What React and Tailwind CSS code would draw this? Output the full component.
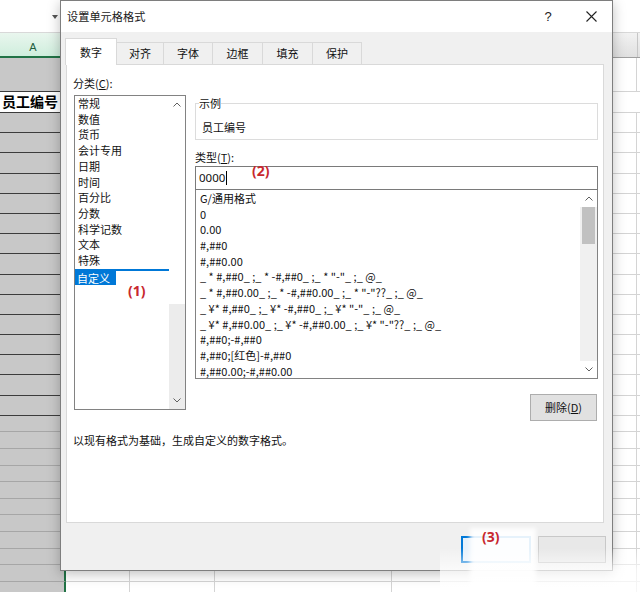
import React from "react";

const CATS = ["常规", "数值", "货币", "会计专用", "日期", "时间", "百分比", "分数", "科学记数", "文本", "特殊"];
const FORMATS = [
  "G/通用格式",
  "0",
  "0.00",
  "#,##0",
  "#,##0.00",
  '_ * #,##0_ ;_ * -#,##0_ ;_ * "-"_ ;_ @_',
  '_ * #,##0.00_ ;_ * -#,##0.00_ ;_ * "-"??_ ;_ @_',
  '_ ¥* #,##0_ ;_ ¥* -#,##0_ ;_ ¥* "-"_ ;_ @_',
  '_ ¥* #,##0.00_ ;_ ¥* -#,##0.00_ ;_ ¥* "-"??_ ;_ @_',
  "#,##0;-#,##0",
  "#,##0;[红色]-#,##0",
  "#,##0.00;-#,##0.00",
];

function Cells({ aClass, rowClass }) {
  return (
    <div className={"flex " + rowClass}>
      <div className={"w-[66px] shrink-0 border-r-2 border-r-[#217346] " + aClass} />
      <div className="w-[64px] shrink-0 border-r border-b border-[#d4d4d4] bg-white" />
      <div className="w-[85px] shrink-0 border-r border-b border-[#d4d4d4] bg-white" />
      <div className="w-[177px] shrink-0 border-r border-b border-[#d4d4d4] bg-white" />
      <div className="w-[245px] shrink-0 border-r border-b border-[#d4d4d4] bg-white" />
      <div className="flex-1 border-b border-[#d4d4d4] bg-white" />
    </div>
  );
}

function Arrow({ up }) {
  return (
    <svg width="8" height="5" viewBox="0 0 8 5" className="block">
      <path d={up ? "M0.5 4.5 L4 1 L7.5 4.5" : "M0.5 0.5 L4 4 L7.5 0.5"} fill="none" stroke="#606060" strokeWidth="1" />
    </svg>
  );
}

export default function App() {
  const darkRows = Array.from({ length: 15 });
  const lightRows = Array.from({ length: 11 });
  return (
    <div className="relative w-[640px] h-[592px] overflow-hidden bg-white font-['Noto_Sans_CJK_SC','Noto_Sans',sans-serif] text-[#111]">
      {/* spreadsheet background */}
      <div className="flex flex-col">
        <div className="h-[33px] bg-white border-b border-[#d8d8d8] flex items-center">
          <div className="ml-[52px] mt-[2px] w-0 h-0 border-l-[3.5px] border-r-[3.5px] border-t-[4px] border-l-transparent border-r-transparent border-t-[#555]" />
        </div>
        <div className="flex h-[25px]">
          <div className="w-[66px] shrink-0 bg-gradient-to-b from-[#e9f6ee] to-[#cfeedd] border-b-2 border-[#217346] flex items-end justify-center pb-[1px] text-[11px] text-[#1e5e3e] font-['Liberation_Sans',sans-serif]">A</div>
          <div className="flex-1 bg-gradient-to-b from-[#f2f2f2] to-[#e0e0e0] border-b border-[#9f9f9f] flex justify-end">
            <div className="w-[3px] border-l border-[#c6c6c6]" />
          </div>
        </div>
        <Cells rowClass="h-[34px]" aClass="bg-[#c8c8c8] border-b-[1.5px] border-b-[#3c3c3c]" />
        <div className="flex h-[21px]">
          <div className="w-[66px] shrink-0 border-r-2 border-r-[#217346] bg-white border-b-[1.5px] border-b-[#3c3c3c] pl-[2px] text-[14px] leading-[19px] font-bold text-black">员工编号</div>
          <div className="flex-1 border-b border-[#d4d4d4] bg-white" />
        </div>
        {darkRows.map((_, i) => (
          <Cells key={"d" + i} rowClass="h-[20.2px]" aClass="bg-[#c8c8c8] border-b-[1.5px] border-b-[#3c3c3c]" />
        ))}
        {lightRows.map((_, i) => (
          <Cells key={"l" + i} rowClass="h-[16.6px]" aClass="bg-[#c8c8c8] border-b border-b-[#a6a6a6]" />
        ))}
      </div>

      {/* dialog */}
      <div className="absolute left-[60px] top-0 w-[553px] h-[571px] border border-[#7e7e7e] bg-[#f0f0f0] shadow-[0_3px_12px_rgba(0,0,0,0.25)] flex flex-col text-[11px]">
        <div className="h-[31px] shrink-0 bg-white flex items-center">
          <div className="flex-1 pl-[6px] text-[11.2px] text-[#1a1a1a]">设置单元格格式</div>
          <div className="w-[44px] text-center text-[13px] font-['Liberation_Sans',sans-serif] text-[#222]">?</div>
          <div className="w-[42px] flex justify-center">
            <svg width="11" height="11" viewBox="0 0 11 11">
              <path d="M0.5 0.5 L10.5 10.5 M10.5 0.5 L0.5 10.5" stroke="#222" strokeWidth="1.1" />
            </svg>
          </div>
        </div>

        <div className="h-[32px] shrink-0 flex items-end pl-[4px]">
          <div className="relative z-10 -mb-px w-[52px] h-[27px] bg-white border border-b-0 border-[#d9d9d9] flex items-center justify-center">数字</div>
          {[["对齐", "w-[47px]"], ["字体", "w-[49px]"], ["边框", "w-[50px]"], ["填充", "w-[50px]"], ["保护", "w-[49px]"]].map(([t, w]) => (
            <div key={t} className={w + " h-[22px] border-t border-r border-[#d9d9d9] bg-[#f0f0f0] flex items-center justify-center"}>{t}</div>
          ))}
        </div>

        <div className="ml-[5px] w-[538px] h-[459px] shrink-0 bg-white border border-[#d9d9d9] flex flex-col">
          <div className="flex pt-[10px]">
            <div className="w-[120px] shrink-0">
              <div className="pl-[6px] leading-[16px]">分类(<span className="underline">C</span>):</div>
              <div className="ml-[7px] mt-[4px] w-[112px] h-[315px] border border-[#828282] flex">
                <div className="flex-1 min-w-0">
                  {CATS.map((c) => (
                    <div key={c} className="pl-[3px] leading-[15.73px] h-[15.73px]">{c}</div>
                  ))}
                  <div className="h-[15.73px] border-t-2 border-[#0078d7] flex">
                    <span className="bg-[#0078d7] text-white pl-[2px] pr-[6px] leading-[14px]">自定义</span>
                  </div>
                </div>
                <div className="w-[16px] flex flex-col">
                  <div className="h-[17px] flex items-center justify-center"><Arrow up /></div>
                  <div className="flex-1 flex flex-col">
                    <div className="h-[191px] bg-white" />
                    <div className="flex-1 bg-[#ececec]" />
                  </div>
                  <div className="h-[17px] bg-[#ececec] flex items-center justify-center"><Arrow /></div>
                </div>
              </div>
            </div>

            <div className="ml-[8px] w-[403px] shrink-0 flex flex-col">
              <fieldset className="mt-[20px] min-w-0 border border-[#dcdcdc] px-[3px]">
                <legend className="leading-[16px] px-0">示例</legend>
                <div className="pl-[3px] pt-[8px] pb-[4px] leading-[16px]">员工编号</div>
              </fieldset>
              <div className="mt-[9px] leading-[16px]">类型(<span className="underline">T</span>):</div>
              <div className="mt-[1px] h-[24px] border border-[#7a7a7a] flex items-center pl-[3px] font-['Noto_Sans',sans-serif] text-[11.5px]">
                <span>0000</span>
                <span className="inline-block w-px h-[14px] bg-black ml-[1px]" />
              </div>
              <div className="h-[189px] border border-t-0 border-[#828282] flex">
                <div className="flex-1 min-w-0 pl-[4px] pt-px">
                  {FORMATS.map((f, i) => (
                    <div key={i} className="leading-[15.7px] h-[15.7px] whitespace-nowrap">{f}</div>
                  ))}
                </div>
                <div className="w-[17px] flex flex-col">
                  <div className="h-[17px] flex items-center justify-center"><Arrow up /></div>
                  <div className="flex-1 bg-[#f0f0f0] px-[2px]">
                    <div className="h-[37px] bg-[#c1c1c1]" />
                  </div>
                  <div className="h-[17px] flex items-center justify-center"><Arrow /></div>
                </div>
              </div>
              <div className="mt-[15px] self-end mr-px w-[67px] h-[27px] bg-[#e1e1e1] border border-[#adadad] flex items-center justify-center">
                删除(<span className="underline">D</span>)
              </div>
            </div>
          </div>
          <div className="mt-[11px] pl-[6px] leading-[16px]">以现有格式为基础，生成自定义的数字格式。</div>
        </div>

        <div className="flex-1 flex items-start pl-[400px] pt-[13px] gap-[7px]">
          <div className="w-[70px] h-[27px] border-2 border-[#0078d7] bg-[#e5f1fb]" />
          <div className="w-[68px] h-[27px] border border-[#c8c8c8] bg-[#e8e8e8]" />
        </div>
      </div>

      {/* washed-out overlay near the bottom buttons */}
      <div className="absolute left-[470px] top-[528px] w-[66px] h-[64px] bg-white/90 blur-[2px]" />
      <div className="absolute left-[440px] top-[548px] w-[200px] h-[44px] bg-gradient-to-b from-white/0 via-white/70 to-white/80" />

      {/* red annotations */}
      <div className="absolute left-[128px] top-[281px] text-[14px] leading-[20px] font-bold text-[#c8282e] font-['Noto_Sans',sans-serif]">(1)</div>
      <div className="absolute left-[252px] top-[161px] text-[14px] leading-[20px] font-bold text-[#c8282e] font-['Noto_Sans',sans-serif]">(2)</div>
      <div className="absolute left-[482px] top-[527px] text-[14px] leading-[20px] font-bold text-[#c8282e] font-['Noto_Sans',sans-serif]">(3)</div>
    </div>
  );
}
